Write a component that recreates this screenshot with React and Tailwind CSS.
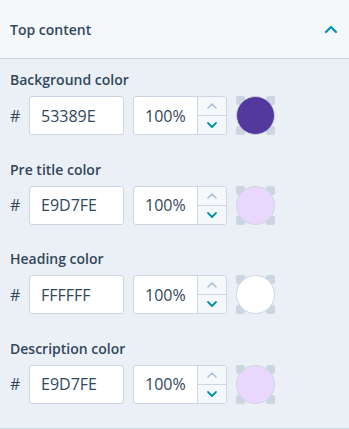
import React from 'react';

const rows = [
  { label: 'Background color', hex: '53389E', fill: '#53389E' },
  { label: 'Pre title color', hex: 'E9D7FE', fill: '#E9D7FE' },
  { label: 'Heading color', hex: 'FFFFFF', fill: '#FFFFFF' },
  { label: 'Description color', hex: 'E9D7FE', fill: '#E9D7FE' },
];

function Swatch({ fill }) {
  return (
    <svg width="39" height="39" viewBox="0 0 39 39" className="shrink-0">
      <rect x="0" y="0" width="9" height="9" rx="2" fill="#cbd6e2" />
      <rect x="30" y="0" width="9" height="9" rx="2" fill="#cbd6e2" />
      <rect x="0" y="30" width="9" height="9" rx="2" fill="#cbd6e2" />
      <rect x="30" y="30" width="9" height="9" rx="2" fill="#cbd6e2" />
      <circle cx="19.5" cy="19.5" r="19" fill={fill} stroke="#cbd6e2" strokeWidth="1" />
    </svg>
  );
}

function Stepper() {
  return (
    <div className="flex flex-col w-[29px] h-full border-l border-[#cbd6e2] bg-[#f5f8fa]">
      <div className="flex-1 flex items-center justify-center border-b border-[#cbd6e2]">
        <svg width="12" height="8" viewBox="0 0 12 8" fill="none">
          <path d="M2 6 L6 2 L10 6" stroke="#b0c1d4" strokeWidth="1.6" strokeLinecap="round" strokeLinejoin="round" />
        </svg>
      </div>
      <div className="flex-1 flex items-center justify-center">
        <svg width="12" height="8" viewBox="0 0 12 8" fill="none">
          <path d="M2 2 L6 6 L10 2" stroke="#0091ae" strokeWidth="1.8" strokeLinecap="round" strokeLinejoin="round" />
        </svg>
      </div>
    </div>
  );
}

function ColorRow({ label, hex, fill }) {
  return (
    <div className="flex flex-col">
      <div className="text-[14px] leading-5 font-semibold text-[#33475b]">{label}</div>
      <div className="mt-[6px] flex items-center h-[39px]">
        <span className="w-[19px] text-[16px] text-[#33475b]">#</span>
        <div className="w-[95px] h-full flex items-center pl-[11px] bg-white border border-[#cbd6e2] rounded-[3px] text-[16px] text-[#33475b]">
          {hex}
        </div>
        <div className="ml-[9px] w-[94px] h-full flex bg-white border border-[#cbd6e2] rounded-[3px] overflow-hidden">
          <div className="flex-1 flex items-center pl-[11px] text-[16px] text-[#33475b]">100%</div>
          <Stepper />
        </div>
        <div className="ml-[9px]">
          <Swatch fill={fill} />
        </div>
      </div>
    </div>
  );
}

export default function App() {
  return (
    <div className="w-[349px] h-[429px] overflow-hidden font-['Open_Sans',sans-serif]">
      <div className="h-[59px] flex items-center justify-between pl-[10px] pr-[11px] bg-[#f5f8fa] border-b border-[#cbd6e2]">
        <span className="text-[14px] font-semibold text-[#33475b]">Top content</span>
        <svg width="14" height="9" viewBox="0 0 14 9" fill="none">
          <path d="M2 7 L7 2 L12 7" stroke="#0091ae" strokeWidth="2.2" strokeLinecap="round" strokeLinejoin="round" />
        </svg>
      </div>
      <div className="h-[370px] bg-[#eaf0f6] border-b border-[#cbd6e2] pt-[11px] pl-[10px] flex flex-col gap-[24.5px]">
        {rows.map((r) => (
          <ColorRow key={r.label} {...r} />
        ))}
      </div>
    </div>
  );
}
